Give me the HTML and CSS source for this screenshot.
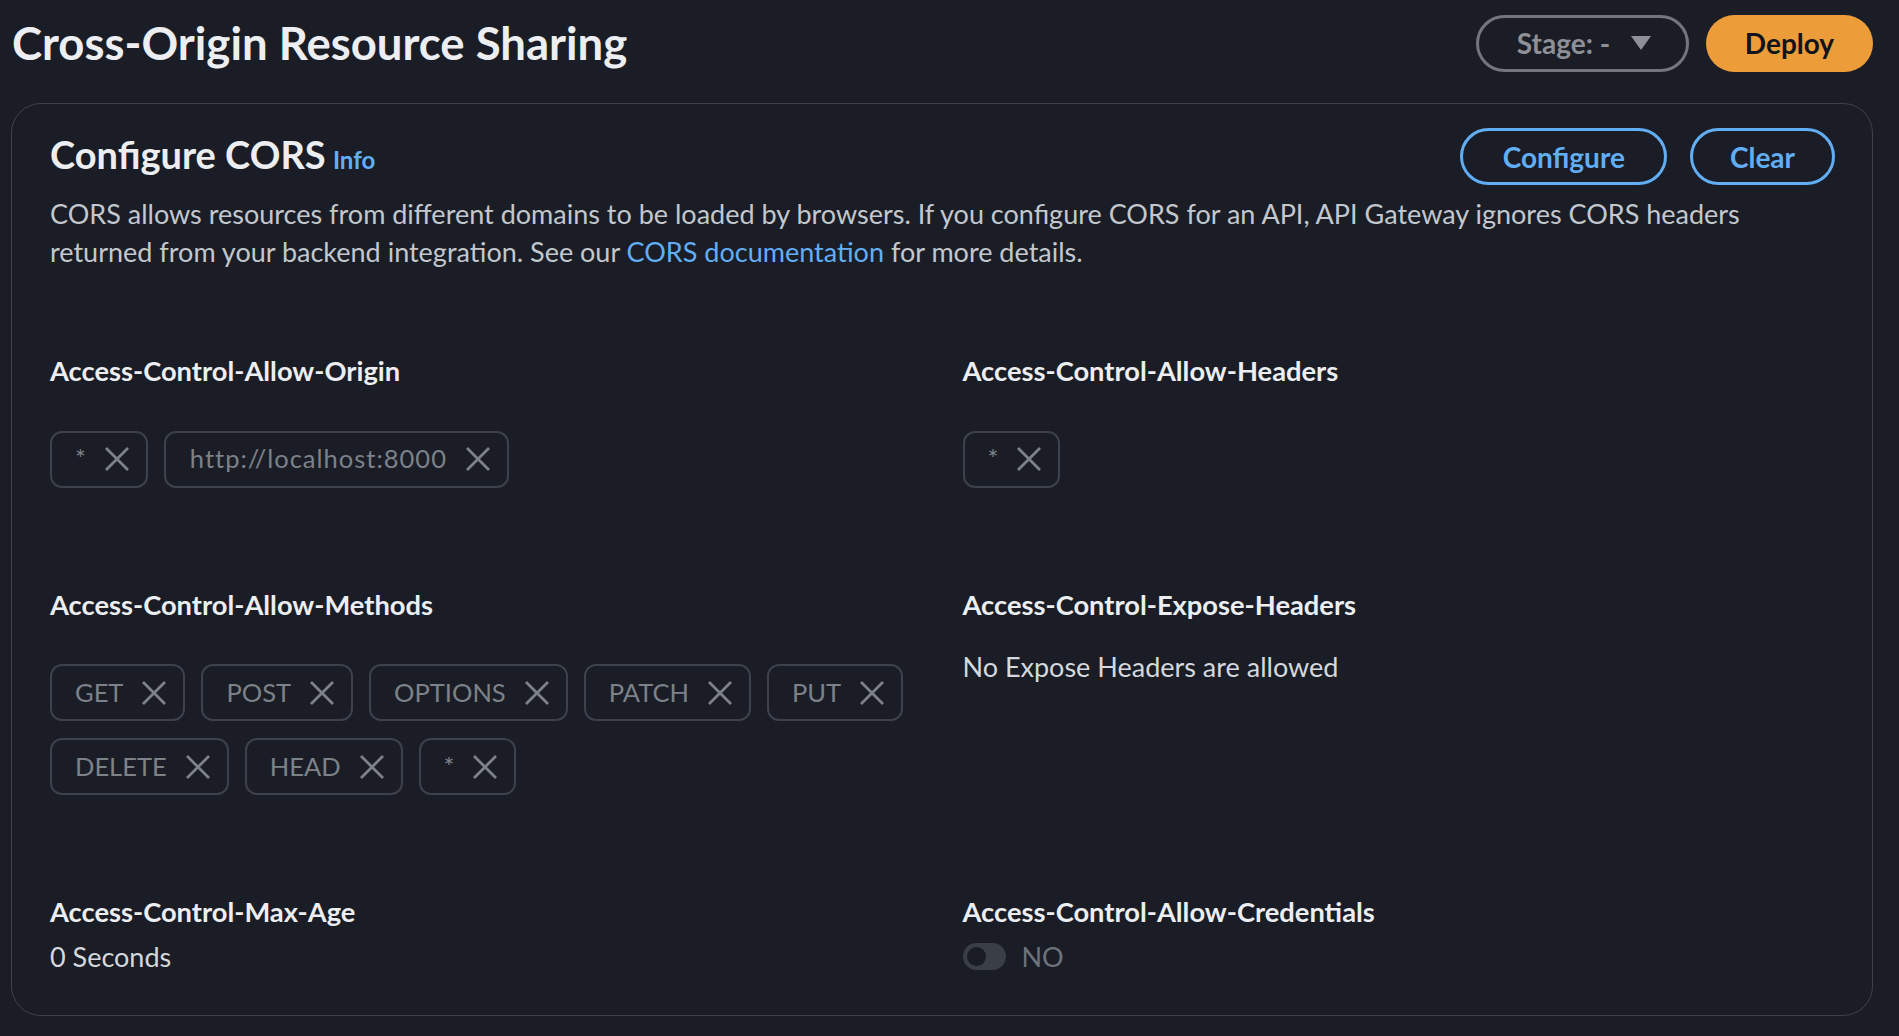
FILE: index.html
```html
<!DOCTYPE html>
<html lang="en">
<head>
<meta charset="utf-8">
<title>Cross-Origin Resource Sharing</title>
<link rel="stylesheet" href="styles.css">
</head>
<body>
<header class="page-header">
  <h1 class="page-title">Cross-Origin Resource Sharing</h1>
  <div class="header-actions">
    <button class="btn btn-stage">Stage: - <svg class="caret" viewBox="0 0 22 16" width="22" height="16"><path d="M1 1 L21 1 L11 15 Z" fill="currentColor"/></svg></button>
    <button class="btn btn-primary">Deploy</button>
  </div>
</header>

<section class="card">
  <div class="card-header">
    <h2 class="card-title">Configure CORS <a class="info" href="#">Info</a></h2>
    <div class="card-actions">
      <button class="btn btn-outline btn-configure">Configure</button>
      <button class="btn btn-outline">Clear</button>
    </div>
  </div>
  <p class="desc">CORS allows resources from different domains to be loaded by browsers. If you configure CORS for an API, API Gateway ignores CORS headers returned from your backend integration. See our <a class="link" href="#">CORS documentation</a> for more details.</p>

  <div class="grid">
    <div class="field">
      <div class="label">Access-Control-Allow-Origin</div>
      <div class="tags">
        <span class="tag">*<svg class="x" viewBox="0 0 26 26"><path d="M2 2 L24 24 M24 2 L2 24"/></svg></span>
        <span class="tag tag-url">http://localhost:8000<svg class="x" viewBox="0 0 26 26"><path d="M2 2 L24 24 M24 2 L2 24"/></svg></span>
      </div>
    </div>
    <div class="field">
      <div class="label">Access-Control-Allow-Headers</div>
      <div class="tags">
        <span class="tag">*<svg class="x" viewBox="0 0 26 26"><path d="M2 2 L24 24 M24 2 L2 24"/></svg></span>
      </div>
    </div>

    <div class="field">
      <div class="label">Access-Control-Allow-Methods</div>
      <div class="tags">
        <span class="tag">GET<svg class="x" viewBox="0 0 26 26"><path d="M2 2 L24 24 M24 2 L2 24"/></svg></span>
        <span class="tag">POST<svg class="x" viewBox="0 0 26 26"><path d="M2 2 L24 24 M24 2 L2 24"/></svg></span>
        <span class="tag">OPTIONS<svg class="x" viewBox="0 0 26 26"><path d="M2 2 L24 24 M24 2 L2 24"/></svg></span>
        <span class="tag">PATCH<svg class="x" viewBox="0 0 26 26"><path d="M2 2 L24 24 M24 2 L2 24"/></svg></span>
        <span class="tag">PUT<svg class="x" viewBox="0 0 26 26"><path d="M2 2 L24 24 M24 2 L2 24"/></svg></span>
        <span class="tag">DELETE<svg class="x" viewBox="0 0 26 26"><path d="M2 2 L24 24 M24 2 L2 24"/></svg></span>
        <span class="tag">HEAD<svg class="x" viewBox="0 0 26 26"><path d="M2 2 L24 24 M24 2 L2 24"/></svg></span>
        <span class="tag">*<svg class="x" viewBox="0 0 26 26"><path d="M2 2 L24 24 M24 2 L2 24"/></svg></span>
      </div>
    </div>
    <div class="field">
      <div class="label">Access-Control-Expose-Headers</div>
      <div class="value value-expose">No Expose Headers are allowed</div>
    </div>

    <div class="field">
      <div class="label">Access-Control-Max-Age</div>
      <div class="value value-tight">0 Seconds</div>
    </div>
    <div class="field">
      <div class="label">Access-Control-Allow-Credentials</div>
      <div class="toggle-row">
        <span class="toggle"><span class="knob"></span></span>
        <span class="toggle-label">NO</span>
      </div>
    </div>
  </div>
</section>
</body>
</html>
```

FILE: styles.css
```css
* { box-sizing: border-box; }

html, body {
  margin: 0;
  padding: 0;
  background: #1a1d25;
}

body {
  font-family: Lato, "Open Sans", sans-serif;
  color: #d5d8dd;
  font-size: 27px;
  line-height: 37.5px;
}

.page-header {
  display: flex;
  justify-content: space-between;
  align-items: center;
  padding: 14px 26px 0 12px;
  height: 72px;
}

.page-title {
  margin: 0;
  font-size: 45.5px;
  line-height: 56px;
  font-weight: 700;
  color: #eceef2;
}

.header-actions {
  display: flex;
  gap: 17px;
}

.btn {
  font-family: Lato, "Open Sans", sans-serif;
  font-weight: 700;
  font-size: 28px;
  line-height: 30px;
  border-radius: 999px;
  cursor: pointer;
  display: inline-flex;
  align-items: center;
  justify-content: center;
}

.btn-stage {
  height: 57px;
  width: 213px;
  background: transparent;
  border: 3px solid #74767d;
  color: #8e9097;
  gap: 20px;
  padding: 0 0 0 4px;
}

.caret { display: block; }

.btn-primary {
  height: 57px;
  width: 167px;
  background: #ec9d3a;
  border: none;
  color: #111419;
}

.card {
  margin: 31px 26px 0 11px;
  border: 1px solid #3d424c;
  border-radius: 30px;
  padding: 24px 37px 40px 38px;
}

.card-header {
  display: flex;
  justify-content: space-between;
  align-items: center;
}

.card-title {
  margin: 0;
  font-size: 38px;
  line-height: 46px;
  font-weight: 700;
  color: #eceef2;
}

.info {
  font-size: 24px;
  font-weight: 700;
  color: #62aef5;
  text-decoration: none;
  margin-left: -2px;
}

.card-actions {
  display: flex;
  gap: 23px;
}

.btn-outline {
  height: 57px;
  background: transparent;
  border: 3px solid #62aef5;
  color: #62aef5;
  padding: 0 37px;
}

.btn-configure {
  padding: 0 39px 0 40px;
}

.desc {
  margin: 10px 0 0;
  color: #c3c7ce;
  max-width: 1760px;
}

.link {
  color: #62aef5;
  text-decoration: none;
}

.grid {
  display: grid;
  grid-template-columns: 1fr 1fr;
  column-gap: 40px;
  row-gap: 98px;
  margin-top: 82px;
}

.label {
  font-weight: 700;
  font-size: 27.3px;
  color: #eceef2;
}

.tags {
  display: flex;
  flex-wrap: wrap;
  gap: 17px 16px;
  margin-top: 41px;
}

.tag {
  display: inline-flex;
  align-items: center;
  height: 57px;
  border: 2px solid #3c414b;
  border-radius: 12px;
  padding: 0 16px 0 23px;
  color: #7d8188;
  font-size: 25.5px;
  gap: 18px;
}

.tag-url {
  letter-spacing: 1px;
  padding-left: 24px;
}

.x {
  width: 26px;
  height: 26px;
  stroke: #7d8188;
  stroke-width: 2.8;
  fill: none;
}

.value {
  color: #d5d8dd;
}

.value-expose { margin-top: 25px; }
.value-tight { margin-top: 7px; }

.toggle-row {
  display: flex;
  align-items: center;
  gap: 16px;
  margin-top: 7px;
  height: 37.5px;
}

.toggle {
  width: 43px;
  height: 27px;
  border-radius: 14px;
  background: #3a3e47;
  display: flex;
  align-items: center;
  padding-left: 4px;
}

.knob {
  width: 19px;
  height: 19px;
  border-radius: 50%;
  background: #1a1d25;
}

.toggle-label {
  color: #6e727a;
}
```
